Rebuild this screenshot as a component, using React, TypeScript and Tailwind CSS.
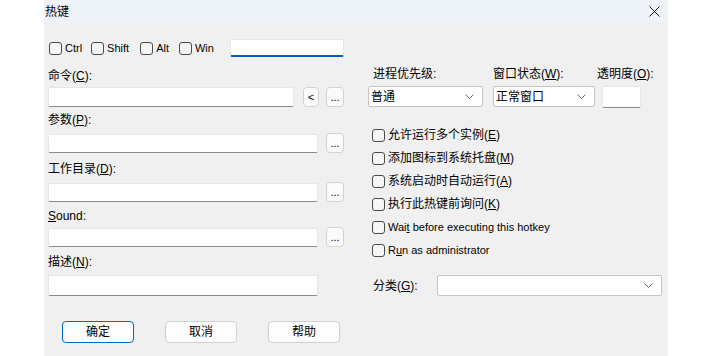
import type { ReactNode } from 'react'

const font = { fontFamily: '"Liberation Sans", "Noto Sans CJK SC", sans-serif' }

function U({ children }: { children: ReactNode }) {
  return <span className="underline underline-offset-[1px]">{children}</span>
}

function Box() {
  return <span className="w-[13px] h-[13px] shrink-0 rounded-[3px] border border-[#4a4a4a] bg-[#f6f6f6]" />
}

function Check({ children, className = '' }: { children: ReactNode; className?: string }) {
  return (
    <label className={`flex items-center gap-[3px] h-[16px] ${className}`}>
      <Box />
      <span>{children}</span>
    </label>
  )
}

function Edit({ className = '' }: { className?: string }) {
  return <div className={`bg-white border border-[#e6e6e6] border-b-[#8a8a8a] rounded-[2px] ${className}`} />
}

function SmallBtn({ children, className = '' }: { children: ReactNode; className?: string }) {
  return (
    <div className={`h-[20px] flex items-center justify-center rounded-[4px] border border-[#d2d2d2] bg-[#fbfbfb] text-[11px] leading-none ${className}`}>
      {children}
    </div>
  )
}

function Chevron() {
  return (
    <svg width="9" height="5" viewBox="0 0 9 5" className="shrink-0">
      <path d="M0.5 0.5 L4.5 4.5 L8.5 0.5" fill="none" stroke="#6b6b6b" strokeWidth="1" />
    </svg>
  )
}

function Combo({ value, className = '' }: { value?: string; className?: string }) {
  return (
    <div className={`h-[21px] bg-white border border-[#c4c4c4] rounded-[2px] flex items-center justify-between pl-[2px] pr-[8px] ${className}`}>
      <span className="text-[12px]">{value}</span>
      <Chevron />
    </div>
  )
}

function Button({ children, primary = false }: { children: ReactNode; primary?: boolean }) {
  return (
    <div
      className={`w-[72px] h-[22px] flex items-center justify-center rounded-[4px] bg-[#fdfdfd] border ${
        primary ? 'border-[#0067c0]' : 'border-[#d0d0d0]'
      }`}
    >
      {children}
    </div>
  )
}

export default function App() {
  return (
    <div className="w-[712px] h-[356px] bg-white text-[12px] text-black leading-[16px]" style={font}>
      <div className="ml-[44px] w-[624px] h-[356px] bg-[#f0f0f0] flex flex-col">
        {/* title bar */}
        <div className="h-[23px] bg-[#eef2f9] flex items-center justify-between pl-[1px] pr-[8px]">
          <span className="text-[12px]">热键</span>
          <svg width="11" height="11" viewBox="0 0 11 11">
            <path d="M0.5 0.5 L10.5 10.5 M10.5 0.5 L0.5 10.5" stroke="#1a1a1a" strokeWidth="1" />
          </svg>
        </div>

        <div className="flex pl-[4px]">
          {/* left column */}
          <div className="w-[296px] flex flex-col">
            <div className="mt-[16px] h-[18px] flex items-center text-[11px]">
              <Check className="ml-[1px]">Ctrl</Check>
              <Check className="ml-[9px]">Shift</Check>
              <Check className="ml-[11px]">Alt</Check>
              <Check className="ml-[10px]">Win</Check>
              <div className="ml-[16px] w-[114px] h-[18px] bg-white border border-[#e6e6e6] border-b-2 border-b-[#005fb8] rounded-[2px]" />
            </div>

            <div className="mt-[11px]">
              命令(<U>C</U>):
            </div>
            <div className="mt-[3px] flex items-center">
              <Edit className="w-[246px] h-[20px]" />
              <SmallBtn className="ml-[9px] w-[16px]">&lt;</SmallBtn>
              <SmallBtn className="ml-[7px] w-[18px]">...</SmallBtn>
            </div>

            <div className="mt-[5px]">
              参数(<U>P</U>):
            </div>
            <div className="mt-[5px] flex items-center">
              <Edit className="w-[270px] h-[19px]" />
              <SmallBtn className="ml-[8px] w-[18px]">...</SmallBtn>
            </div>

            <div className="mt-[8px]">
              工作目录(<U>D</U>):
            </div>
            <div className="mt-[5px] flex items-center">
              <Edit className="w-[270px] h-[19px]" />
              <SmallBtn className="ml-[8px] w-[18px]">...</SmallBtn>
            </div>

            <div className="mt-[6px]">
              <U>S</U>ound:
            </div>
            <div className="mt-[3px] flex items-center">
              <Edit className="w-[270px] h-[19px]" />
              <SmallBtn className="ml-[8px] w-[18px]">...</SmallBtn>
            </div>

            <div className="mt-[7px]">
              描述(<U>N</U>):
            </div>
            <div className="mt-[5px]">
              <Edit className="w-[270px] h-[21px]" />
            </div>

            <div className="mt-[25px] flex pl-[14px] gap-[31px]">
              <Button primary>确定</Button>
              <Button>取消</Button>
              <Button>帮助</Button>
            </div>
          </div>

          {/* right column */}
          <div className="ml-[24px] w-[294px] flex flex-col">
            <div className="mt-[43px] flex">
              <div className="w-[125px] pl-[5px]">进程优先级:</div>
              <div className="w-[104px]">
                窗口状态(<U>W</U>):
              </div>
              <div>
                透明度(<U>O</U>):
              </div>
            </div>
            <div className="mt-[4px] flex">
              <Combo value="普通" className="w-[115px]" />
              <Combo value="正常窗口" className="ml-[10px] w-[102px]" />
              <Edit className="ml-[7px] w-[39px] h-[22px]" />
            </div>

            <div className="mt-[19px] flex flex-col gap-[7px] pl-[4px]">
              <Check>允许运行多个实例(<U>E</U>)</Check>
              <Check>添加图标到系统托盘(<U>M</U>)</Check>
              <Check>系统启动时自动运行(<U>A</U>)</Check>
              <Check>执行此热键前询问(<U>K</U>)</Check>
              <Check>
                <span className="text-[11px]">
                  Wai<U>t</U> before executing this hotkey
                </span>
              </Check>
              <Check>
                <span className="text-[11px]">
                  R<U>u</U>n as administrator
                </span>
              </Check>
            </div>

            <div className="mt-[17px] flex items-center">
              <div className="w-[69px] pl-[5px]">
                分类(<U>G</U>):
              </div>
              <Combo className="w-[225px]" />
            </div>
          </div>
        </div>
      </div>
    </div>
  )
}
